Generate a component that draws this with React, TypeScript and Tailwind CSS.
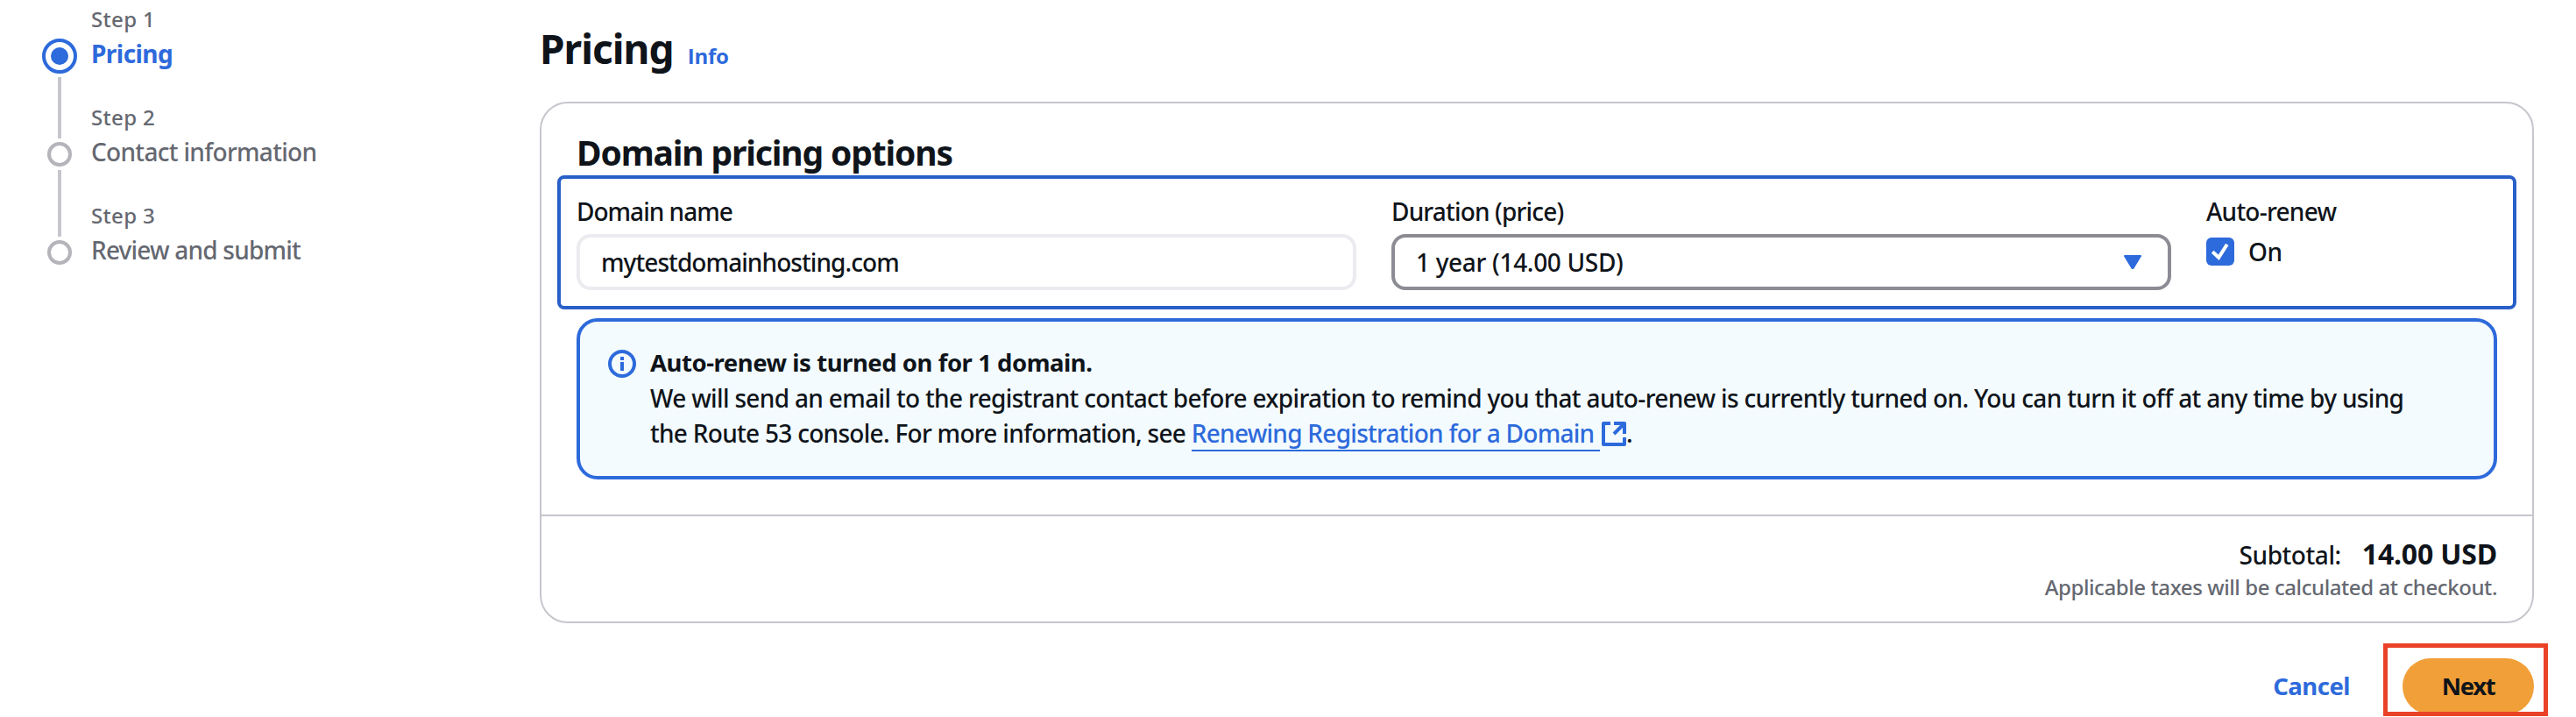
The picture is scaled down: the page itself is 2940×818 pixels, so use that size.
const steps = [
  { label: "Step 1", title: "Pricing", titleClass: "font-bold tracking-[-0.55px] text-[#2d6adb]" },
  { label: "Step 2", title: "Contact information", titleClass: "tracking-[-0.69px] text-[#656871]" },
  { label: "Step 3", title: "Review and submit", titleClass: "tracking-[-0.8px] text-[#656871]" },
];

function StepRail() {
  return (
    <div className="flex w-10 flex-col items-center gap-1 pt-11">
      <div className="flex size-10 items-center justify-center rounded-full border-4 border-[#2d6adb]">
        <div className="size-5 rounded-full bg-[#2d6adb]" />
      </div>
      <div className="h-[70px] w-1 bg-[#c6c6cd]" />
      <div className="size-7 rounded-full border-4 border-[#b4b4bb]" />
      <div className="h-[76px] w-1 bg-[#c6c6cd]" />
      <div className="size-7 rounded-full border-4 border-[#b4b4bb]" />
    </div>
  );
}

function StepNav() {
  return (
    <nav className="flex w-[616px] shrink-0 gap-4 pl-12">
      <StepRail />
      <ol className="flex flex-col gap-[34px] pt-1">
        {steps.map((s) => (
          <li key={s.label} className="flex flex-col">
            <span className="text-2xl leading-9 tracking-[0.34px] text-[#656871]">{s.label}</span>
            <span className={`leading-[42px] ${s.titleClass}`}>{s.title}</span>
          </li>
        ))}
      </ol>
    </nav>
  );
}

function InfoIcon() {
  return (
    <svg className="mt-[5px] size-8 shrink-0" viewBox="0 0 32 32" fill="none" stroke="#2d6adb" strokeWidth="4">
      <circle cx="16" cy="16" r="14" />
      <path d="M16 14v10M16 8v4" />
    </svg>
  );
}

function ExternalIcon() {
  return (
    <svg className="ml-0.5 inline-block h-7 w-7 align-[-4px]" viewBox="0 0 28 28" fill="none" stroke="#2d6adb" strokeWidth="4">
      <path d="M10 2H2v24h24v-8" strokeLinejoin="round" />
      <path d="M14 2h12v12M25 3L14 14" strokeLinejoin="round" />
    </svg>
  );
}

function PricingRow() {
  return (
    <div className="-mx-[22px] mt-0.5 flex h-[153px] gap-10 rounded-lg border-4 border-[#285fc8] px-[18px] pt-[17px] leading-10">
      <div className="flex w-[890px] flex-col gap-1.5">
        <label className="tracking-[-0.99px]">Domain name</label>
        <div className="flex h-16 items-center rounded-2xl border-4 border-[#ebebf0] pl-6 tracking-[-0.92px]">
          mytestdomainhosting.com
        </div>
      </div>
      <div className="flex w-[890px] flex-col gap-1.5">
        <label className="tracking-[-0.83px]">Duration (price)</label>
        <div className="flex h-16 items-center justify-between rounded-2xl border-4 border-[#8c8c94] pl-6 pr-[30px] tracking-[-0.32px]">
          <span>1 year (14.00 USD)</span>
          <svg className="h-4 w-5" viewBox="0 0 20 16" fill="#2d6adb" stroke="#2d6adb" strokeWidth="2" strokeLinejoin="round">
            <path d="M1 1h18L10.5 15h-1z" />
          </svg>
        </div>
      </div>
      <div className="flex flex-col gap-1.5">
        <label className="tracking-[-0.75px]">Auto-renew</label>
        <div className="flex items-center gap-4">
          <span className="flex size-8 items-center justify-center rounded-md bg-[#2d6adb]">
            <svg className="size-8" viewBox="0 0 32 32" fill="none" stroke="#fff" strokeWidth="4">
              <path d="M7.2 16.2l7 6.6L23.8 7.8" />
            </svg>
          </span>
          <span className="tracking-[-0.5px]">On</span>
        </div>
      </div>
    </div>
  );
}

function RenewAlert() {
  return (
    <div className="mt-2.5 flex h-[184px] gap-4 rounded-3xl border-4 border-[#2d6adb] bg-[#f3fbfe] pl-8 pt-[27px] leading-10">
      <InfoIcon />
      <div className="whitespace-nowrap">
        <div className="text-[27.5px] font-bold tracking-[-0.46px]">Auto-renew is turned on for 1 domain.</div>
        <div className="tracking-[-0.66px]">
          We will send an email to the registrant contact before expiration to remind you that auto-renew is currently
          turned on. You can turn it off at any time by using
        </div>
        <div className="tracking-[-0.71px]">
          the Route 53 console. For more information, see{" "}
          <a className="border-b-2 border-[#2d6adb] tracking-[-0.73px] text-[#2d6adb]">
            Renewing Registration for a Domain&nbsp;
          </a>
          <ExternalIcon />.
        </div>
      </div>
    </div>
  );
}

export default function App() {
  return (
    <div className="relative flex h-[818px] w-[2940px] overflow-hidden bg-white font-['Noto_Sans',sans-serif] text-[28px] font-medium text-[#0f141a]">
      <StepNav />
      <main className="w-[2276px]">
        <header className="flex h-[116px] items-baseline gap-4 pt-[25px]">
          <h1 className="text-[46px] font-bold leading-[60px] tracking-[-0.95px]">Pricing</h1>
          <a className="font-['Open_Sans',sans-serif] text-2xl font-bold tracking-[-0.2px] text-[#2d6adb]">Info</a>
        </header>

        <section className="h-[595px] rounded-[32px] border-2 border-[#c6c6cd]">
          <div className="px-10 pt-8">
            <h2 className="text-[39px] font-bold leading-[48px] tracking-[-1.14px]">Domain pricing options</h2>
            <PricingRow />
            <RenewAlert />
          </div>
          <footer className="mt-10 flex flex-col items-end border-t-2 border-[#c6c6cd] px-10 pt-[23px]">
            <div className="flex items-baseline gap-6 leading-10">
              <span className="tracking-[-0.43px]">Subtotal:</span>
              <span className="text-[32px] font-bold tracking-[-0.17px]">14.00 USD</span>
            </div>
            <p className="-mt-px text-2xl leading-9 tracking-[-0.41px] text-[#656871]">
              Applicable taxes will be calculated at checkout.
            </p>
          </footer>
        </section>

        <div className="mt-10 flex h-16 items-center justify-end gap-[60px] text-[27.5px] font-bold">
          <a className="tracking-[-0.5px] text-[#2d6adb]">Cancel</a>
          <button className="h-16 w-[150px] rounded-full bg-[#f19f38] tracking-[-1.4px]">Next</button>
        </div>
      </main>
      <div className="absolute left-[2720px] top-[734px] h-[83px] w-[188px] border-[5px] border-[#ea4227]" />
    </div>
  );
}
